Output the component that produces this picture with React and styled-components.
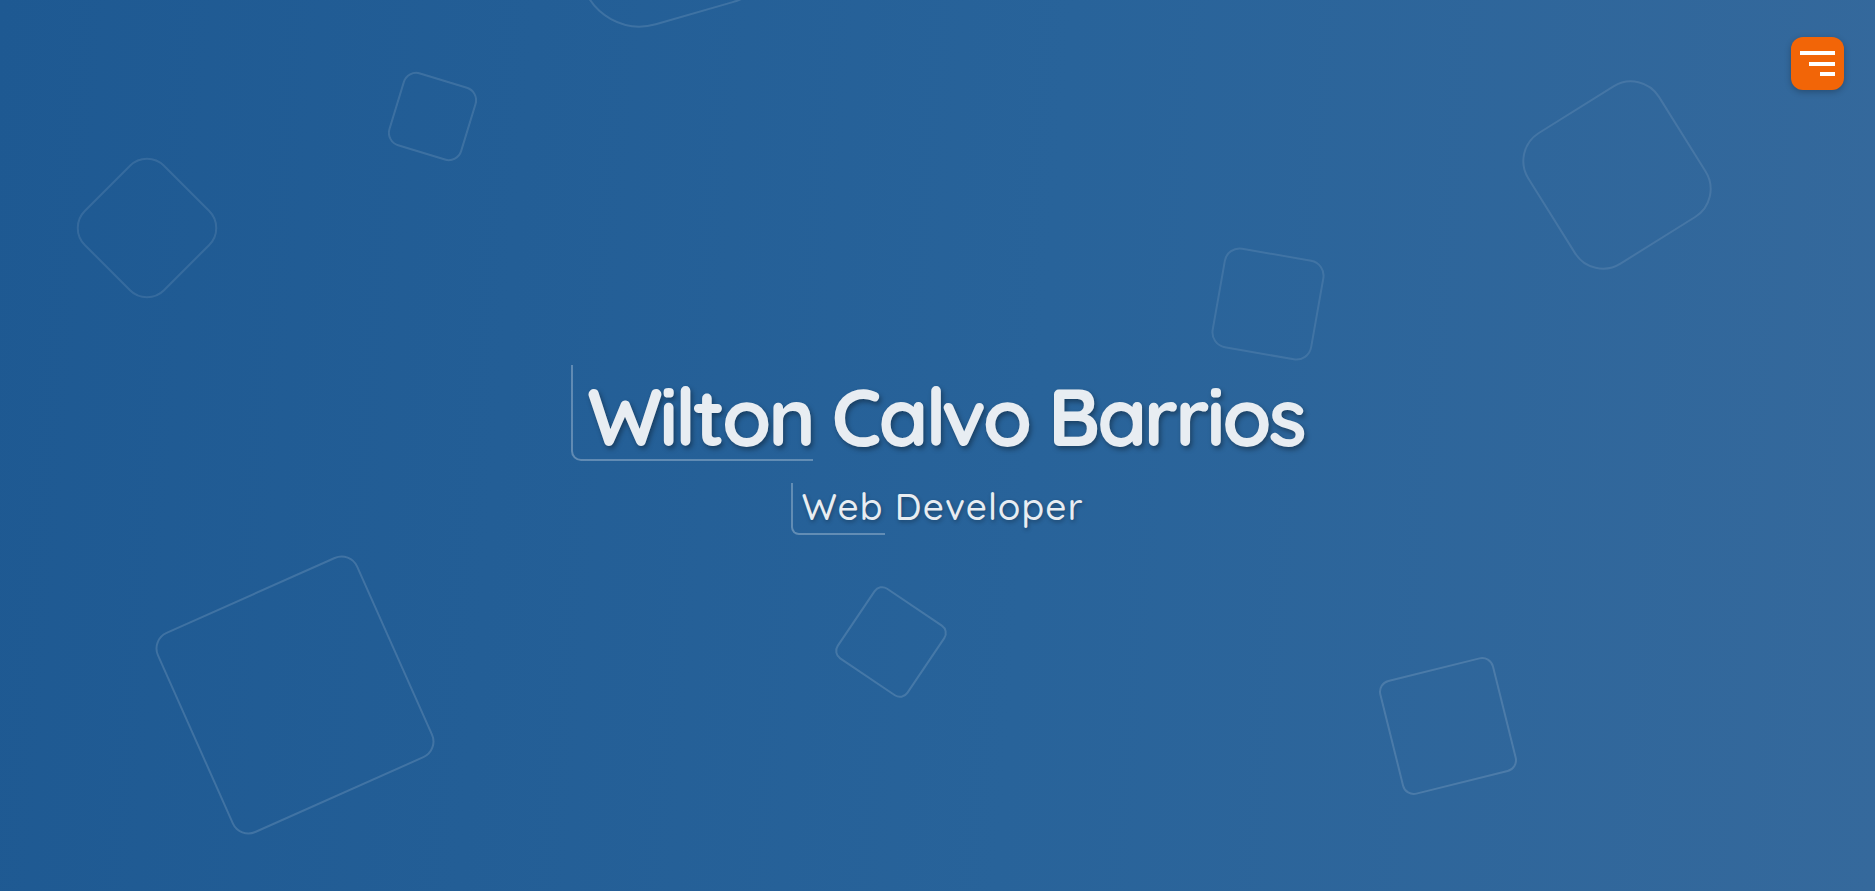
import React from "react";
import styled, { createGlobalStyle } from "styled-components";

const GlobalStyle = createGlobalStyle`
  * { box-sizing: border-box; }
  html, body { margin: 0; padding: 0; height: 100%; overflow: hidden; }
  body {
    font-family: "Quicksand", "Lato", "Noto Sans", sans-serif;
    background: #1e5992;
  }
`;

const Hero = styled.main`
  position: relative;
  width: 100%;
  height: 100vh;
  overflow: hidden;
  background: linear-gradient(95deg, #1e5992 0%, #28639a 55%, #35699c 100%);
  display: flex;
  flex-direction: column;
  align-items: center;
  justify-content: center;
  gap: 21px;
  padding-top: 4px;
`;

const Shape = styled.span`
  position: absolute;
  left: ${(p) => p.$x}px;
  top: ${(p) => p.$y}px;
  width: ${(p) => p.$s}px;
  height: ${(p) => p.$s}px;
  margin-left: ${(p) => -p.$s / 2}px;
  margin-top: ${(p) => -p.$s / 2}px;
  border: 2px solid rgba(255, 255, 255, ${(p) => p.$o});
  border-radius: ${(p) => p.$r}px;
  transform: rotate(${(p) => p.$rot}deg);
  pointer-events: none;
`;

const Title = styled.h1`
  position: relative;
  margin: 0;
  padding: 0 0 0 16px;
  font-family: "Quicksand", "Lato", sans-serif;
  font-weight: 700;
  font-size: 80px;
  line-height: 1.2;
  letter-spacing: -3.4px;
  color: #e8edf2;
  text-shadow: 2px 3px 5px rgba(0, 0, 0, 0.35);
  z-index: 1;

  &::before {
    content: "";
    position: absolute;
    left: 0;
    top: -3px;
    width: 240px;
    height: 94px;
    border-left: 2px solid rgba(255, 255, 255, 0.28);
    border-bottom: 2px solid rgba(255, 255, 255, 0.28);
    border-bottom-left-radius: 10px;
  }
`;

const Subtitle = styled.h2`
  position: relative;
  margin: 0;
  padding: 0 0 0 10px;
  font-family: "Quicksand", "Lato", sans-serif;
  font-weight: 500;
  font-size: 37px;
  line-height: 1.15;
  letter-spacing: 1.1px;
  color: #e8edf2;
  text-shadow: 1px 2px 4px rgba(0, 0, 0, 0.3);
  z-index: 1;

  &::before {
    content: "";
    position: absolute;
    left: 0;
    top: -2px;
    width: 92px;
    height: 50px;
    border-left: 2px solid rgba(255, 255, 255, 0.28);
    border-bottom: 2px solid rgba(255, 255, 255, 0.28);
    border-bottom-left-radius: 8px;
  }
`;

const MenuButton = styled.button`
  position: absolute;
  top: 37px;
  right: 31px;
  width: 53px;
  height: 53px;
  border: none;
  border-radius: 12px;
  background: #f26507;
  box-shadow: 0 2px 6px rgba(0, 0, 0, 0.25);
  display: flex;
  flex-direction: column;
  align-items: flex-end;
  justify-content: center;
  gap: 6.5px;
  padding: 0 9px 0 0;
  cursor: pointer;
  z-index: 2;
`;

const Bar = styled.span`
  display: block;
  width: ${(p) => p.$w}px;
  height: 4px;
  background: #ffffff;
`;

const shapes = [
  { x: 667, y: -82, s: 200, r: 60, rot: -16, o: 0.12 },
  { x: 432, y: 116, s: 77, r: 14, rot: 17, o: 0.12 },
  { x: 147, y: 228, s: 114, r: 25, rot: 45, o: 0.1 },
  { x: 295, y: 695, s: 220, r: 18, rot: -24, o: 0.14 },
  { x: 891, y: 642, s: 86, r: 10, rot: 34, o: 0.14 },
  { x: 1268, y: 304, s: 102, r: 16, rot: 10, o: 0.1 },
  { x: 1617, y: 175, s: 156, r: 34, rot: -32, o: 0.1 },
  { x: 1448, y: 726, s: 118, r: 12, rot: -14, o: 0.14 },
];

export default function App() {
  return (
    <>
      <GlobalStyle />
      <Hero>
        {shapes.map((sh, i) => (
          <Shape key={i} $x={sh.x} $y={sh.y} $s={sh.s} $r={sh.r} $rot={sh.rot} $o={sh.o} />
        ))}
        <MenuButton aria-label="Menu">
          <Bar $w={35} />
          <Bar $w={26} />
          <Bar $w={15} />
        </MenuButton>
        <Title>Wilton Calvo Barrios</Title>
        <Subtitle>Web Developer</Subtitle>
      </Hero>
    </>
  );
}
